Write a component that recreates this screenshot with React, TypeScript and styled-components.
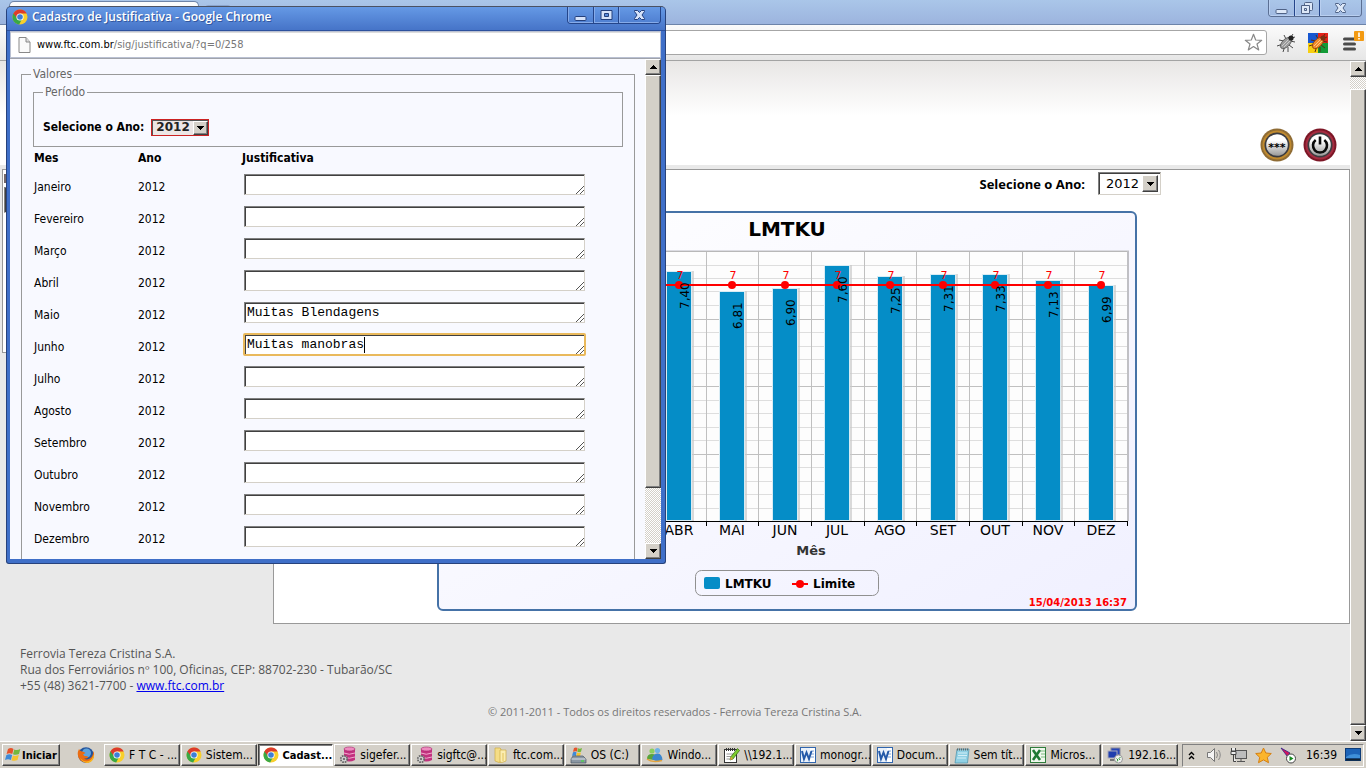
import React from 'react';
import styled, { createGlobalStyle, css } from 'styled-components';

const tahoma = '"DejaVu Sans Condensed", "DejaVu Sans", Tahoma, sans-serif';
const verdana = '"DejaVu Sans", Verdana, sans-serif';
const trebuchet = '"Open Sans", "Trebuchet MS", sans-serif';
const silver = '#d4d0c8';

const GlobalStyle = createGlobalStyle`
  * { box-sizing: border-box; }
  body { margin: 0; overflow: hidden; background: #e9e9e9; font-family: ${tahoma}; font-size: 12px; color: #000; }
  button, select, input, textarea { font: inherit; color: inherit; margin: 0; border-radius: 0; }
  svg { display: block; flex: none; }
`;

const raised = css`
  border: 1px solid;
  border-color: #fff #404040 #404040 #fff;
  box-shadow: inset -1px -1px 0 #808080;
`;
const sunken = css`
  border: 1px solid;
  border-color: #808080 #d4d0c8 #d4d0c8 #808080;
  box-shadow: inset 1px 1px 0 #404040;
`;

/* ---------- desktop and main browser window ---------- */
const Desktop = styled.div`
  position: relative;
  display: flex;
  flex-direction: column;
  height: 100vh;
`;
const TabStrip = styled.div`
  display: flex;
  justify-content: space-between;
  height: 25px;
  padding: 0 4px 0 9px;
  background: linear-gradient(#aac6e9, #9cb4de);
  border-bottom: 1px solid #6d84a9;
`;
const Tab = styled.div`
  width: 190px;
  margin-top: 1px;
  background: #fafbfc;
  border: 1px solid #6d84a9;
  border-bottom: 0;
  border-radius: 5px 5px 0 0;
`;
const NewTab = styled.button`
  width: 26px;
  height: 14px;
  margin: 5px auto 0 6px;
  padding: 0;
  background: #b9cfec;
  border: 1px solid #8aa5cd;
  border-radius: 3px;
`;
const WindowControls = styled.div<{ $bright?: boolean }>`
  display: flex;
  height: 17px;
  border: 1px solid ${p => (p.$bright ? '#24458a' : '#5b6f93')};
  border-top: 0;
  border-radius: 0 0 4px 4px;
  overflow: hidden;
`;
const ControlButton = styled.button<{ $wide?: boolean; $bright?: boolean }>`
  display: flex;
  align-items: center;
  justify-content: center;
  width: ${p => (p.$wide ? 42 : 25)}px;
  padding: 0;
  border: 0;
  background: transparent;
  box-shadow: inset 1px -1px 0 ${p => (p.$bright ? '#86abe9' : '#b9cff0')};
  & + & { border-left: 1px solid ${p => (p.$bright ? '#24458a' : '#5b6f93')}; }
`;
const Toolbar = styled.div`
  display: flex;
  align-items: center;
  height: 36px;
  padding: 0 2px 0 60px;
  background: linear-gradient(#fbfbfb, #e6e6e6);
  border-bottom: 1px solid #a3a3a3;
`;
const AddressBox = styled.div`
  display: flex;
  flex: 1;
  align-items: center;
  height: 25px;
  padding-right: 3px;
  background: #fff;
  border: 1px solid #a6a6a6;
  border-radius: 3px;
`;
const AddressInput = styled.input`
  flex: 1;
  min-width: 0;
  border: 0;
  outline: 0;
  background: transparent;
`;
const IconButton = styled.button<{ $gap?: number }>`
  display: flex;
  margin-left: ${p => p.$gap ?? 0}px;
  padding: 0;
  border: 0;
  background: transparent;
`;
const Viewport = styled.div`
  display: flex;
  flex: 1;
  min-height: 0;
`;
const Page = styled.div`
  flex: 1;
  min-width: 0;
  overflow: hidden;
  background: #e9e9e9;
`;
const SiteHeader = styled.header`
  display: flex;
  align-items: flex-end;
  justify-content: flex-end;
  height: 104px;
  padding: 0 13px 2px 0;
  background: linear-gradient(#e8e6e5, #fff 55px);
`;
const Columns = styled.div`
  display: flex;
  align-items: flex-start;
  padding: 4px 0 0 2px;
`;
const SideMenu = styled.nav`
  width: 264px;
  height: 184px;
  margin-right: 7px;
  background: #fff;
  border: 1px solid #999;
`;
const SideHandle = styled.div`
  width: 16px;
  height: 9px;
  margin: 4px 1px 4px;
  background: #74696a;
`;
const SideBox = styled.div`
  height: 26px;
  margin-left: 1px;
  ${sunken}
`;
const MainPanel = styled.main`
  flex: 1;
  min-width: 0;
  padding: 2px 0 12px 163px;
  background: #fff;
  border: 1px solid #999;
`;
const YearRow = styled.div`
  display: flex;
  align-items: flex-start;
  justify-content: flex-end;
  width: 724px;
  height: 39px;
`;
const YearLabel = styled.label`
  padding-right: 13px;
  font: bold 13px/24px ${trebuchet};
`;
const SelectBox = styled.span<{ $small?: boolean }>`
  position: relative;
  display: block;
  width: ${p => (p.$small ? 58 : 63)}px;
  height: ${p => (p.$small ? 17 : 23)}px;
`;
const YearSelect = styled.select<{ $small?: boolean }>`
  display: block;
  appearance: none;
  width: 100%;
  height: 100%;
  outline: 0;
  ${p => (p.$small ? css`
    padding: 0 0 0 4px;
    font: bold 12px/15px ${verdana};
    color: #222;
    background: #ece7e6;
    border: 1px solid #c22;
    box-shadow: inset 1px 1px 0 #555;
  ` : css`
    padding: 0 0 0 7px;
    font: 13px/21px ${verdana};
    background: #fff;
    ${sunken}
  `)}
`;
const SelectArrow = styled.span<{ $small?: boolean }>`
  position: absolute;
  top: ${p => (p.$small ? 2 : 3)}px;
  right: ${p => (p.$small ? 1 : 3)}px;
  bottom: ${p => (p.$small ? 1 : 3)}px;
  display: flex;
  align-items: center;
  justify-content: center;
  width: ${p => (p.$small ? 15 : 16)}px;
  background: ${silver};
  pointer-events: none;
  ${raised}
`;
const Footer = styled.footer`
  padding: 22px 0 0 20px;
  font: 12px/16px ${trebuchet};
  color: #555;
`;
const Address = styled.address`
  font-style: normal;
  a { color: #00e; }
`;
const Copyright = styled.p`
  margin: 10px 20px 0 0;
  font-size: 11px;
  text-align: center;
  color: #777;
`;

/* ---------- classic scroll bar ---------- */
const ScrollTrack = styled.div`
  display: flex;
  flex-direction: column;
  width: 16px;
  background: repeating-conic-gradient(${silver} 0 25%, #fff 0 50%) 0 0 / 2px 2px;
`;
const ScrollButton = styled.button`
  display: flex;
  align-items: center;
  justify-content: center;
  height: 16px;
  padding: 0;
  background: ${silver};
  ${raised}
`;
const ScrollThumb = styled.div<{ $before: number; $after: number }>`
  flex: 1;
  margin: ${p => p.$before}px 0 ${p => p.$after}px;
  background: ${silver};
  ${raised}
`;

/* ---------- popup window ---------- */
const Popup = styled.section`
  position: absolute;
  top: 6px;
  left: 6px;
  display: flex;
  flex-direction: column;
  width: 660px;
  height: 558px;
  padding: 0 4px 4px 3px;
  background: #3f6fc8;
  border: 1px solid #27427c;
  border-top-color: #4b5263;
  border-radius: 5px 5px 3px 3px;
`;
const PopupTitle = styled.div`
  display: flex;
  align-items: flex-start;
  height: 24px;
  margin: 0 -4px 0 -3px;
  padding: 0 4px 0 5px;
  background: linear-gradient(#6599e5, #4674c8);
  border-bottom: 1px solid #2d519d;
  border-radius: 4px 4px 0 0;
`;
const PopupHeading = styled.h1`
  flex: 1;
  margin: 0;
  padding-left: 4px;
  font: 600 12px/20px ${trebuchet};
  color: #fff;
  text-shadow: 1px 1px 0 #34589f;
`;
const LogoSlot = styled.span`
  padding-top: 2px;
`;
const UrlBar = styled.div`
  display: flex;
  align-items: center;
  height: 27px;
  padding: 0 7px;
  background: #fff;
  border: 1px solid #b9c0d2;
  box-shadow: inset 0 1px 0 #ddd;
`;
const Url = styled.span`
  padding-left: 6px;
  font: 11px/16px ${tahoma};
  color: #777;
  b { font-weight: normal; color: #000; }
`;
const PopupView = styled.div`
  display: flex;
  flex: 1;
  min-height: 0;
  background: #f8f9ff;
  border-top: 1px solid #a0a3ab;
`;
const Form = styled.form`
  flex: 1;
  overflow: hidden;
  padding: 7px 10px 0 11px;
`;
const Group = styled.fieldset<{ $inner?: boolean }>`
  min-width: 0;
  margin: 0;
  padding: ${p => (p.$inner ? '19px 8px 10px 9px' : '2px 11px 20px')};
  border: 1px solid #999;
`;
const Legend = styled.legend<{ $inner?: boolean }>`
  margin-left: ${p => (p.$inner ? 0 : -2)}px;
  padding: 0 2px;
  line-height: 16px;
  color: #666;
`;
const PeriodRow = styled.div`
  display: flex;
  align-items: center;
  gap: 7px;
  font-weight: bold;
  line-height: 17px;
`;
const Months = styled.table`
  width: 100%;
  border-collapse: collapse;
  table-layout: fixed;
  th { height: 21px; padding: 0 0 0 1px; text-align: left; }
  td { height: 32px; padding: 0 0 0 1px; line-height: 16px; }
  th:nth-child(-n + 2) { width: 104px; }
  td:nth-child(-n + 2) { padding-top: 6px; }
  td:last-child { padding: 0 0 0 3px; }
`;
const NoteWrap = styled.div`
  position: relative;
  width: 341px;
  height: 21px;
`;
const Note = styled.textarea<{ $active?: boolean }>`
  display: block;
  width: 100%;
  height: 100%;
  padding: 2px 2px 0;
  resize: none;
  overflow: hidden;
  font: 13px/16px "Liberation Mono", monospace;
  background: #fff;
  ${sunken}
  outline: ${p => (p.$active ? '2px solid #e9b95c' : '0')};
  outline-offset: ${p => (p.$active ? -1 : 0)}px;
  border-radius: ${p => (p.$active ? 1 : 0)}px;
`;
const Grip = styled.span`
  position: absolute;
  right: 1px;
  bottom: 1px;
`;
const Caret = styled.span`
  position: absolute;
  top: 3px;
  left: calc(15ch + 3px);
  width: 1px;
  height: 16px;
  background: #000;
  font: 13px/16px "Liberation Mono", monospace;
`;

/* ---------- taskbar ---------- */
const Taskbar = styled.div`
  display: flex;
  align-items: center;
  height: 27px;
  padding: 1px 2px 0;
  background: ${silver};
  box-shadow: inset 0 1px 0 #fff;
`;
const TaskButton = styled.button<{ $active?: boolean; $start?: boolean }>`
  display: flex;
  align-items: center;
  height: 22px;
  overflow: hidden;
  white-space: nowrap;
  background: ${silver};
  ${raised}
  ${p => (p.$start ? css`
    width: 58px;
    padding: 0 1px;
    gap: 1px;
    font-size: 11px;
    font-weight: bold;
  ` : css`
    flex: 1;
    min-width: 0;
    padding: 0 2px 0 4px;
    gap: 4px;
  `)}
  ${p => p.$active && css`
    font-size: 11px;
    font-weight: bold;
    background: #fff;
    border-color: #404040 #fff #fff #404040;
    box-shadow: inset 1px 1px 0 #808080;
  `}
`;
const QuickLaunch = styled.div`
  padding: 0 9px 0 17px;
`;
const TaskList = styled.div`
  display: flex;
  flex: 1;
  min-width: 0;
  gap: 1px;
`;
const Tray = styled.div`
  display: flex;
  align-items: center;
  gap: 8px;
  height: 23px;
  margin-left: 4px;
  padding: 0 2px 0 4px;
  border: 1px solid;
  border-color: #808080 #fff #fff #808080;
`;
const Clock = styled.time`
  padding-left: 1px;
`;

/* ---------- icons ---------- */
const Triangle = ({ up }: { up?: boolean }) => (
  <svg width="7" height="4" viewBox="0 0 7 4" shapeRendering="crispEdges">
    <path d={up ? 'M3 0h1v1h1v1h1v1h1v1H0V3h1V2h1V1h1z' : 'M0 0h7v1H6v1H5v1H4v1H3V3H2V2H1V1H0z'} />
  </svg>
);

const ChromeLogo = ({ size = 16 }: { size?: number }) => (
  <svg width={size} height={size} viewBox="0 0 16 16">
    <circle cx="8" cy="8" r="7.5" fill="#f8cf2c" />
    <path d="M8 8 1.5 4.3A7.5 7.5 0 0 0 7.2 15.5L10 10z" fill="#39a845" />
    <path d="M1.4 4.4A7.5 7.5 0 0 1 14.7 4.6H8L5 9z" fill="#dc3b2c" />
    <circle cx="8" cy="8" r="3.6" fill="#fff" />
    <circle cx="8" cy="8" r="2.8" fill="#3d7fd6" />
  </svg>
);

const Minimize = ({ c, o }: { c: string; o: string }) => (
  <svg width="13" height="14" viewBox="0 0 13 14"><rect x="1" y="8.5" width="11" height="4" rx="1" fill={c} stroke={o} /></svg>
);
const Maximize = ({ c, o }: { c: string; o: string }) => (
  <svg width="13" height="12" viewBox="0 0 13 12">
    <path d="M1 1.5h11v9H1zM4.500 4.500v3h4v-3z" fill={c} stroke={o} fillRule="evenodd" />
  </svg>
);
const Restore = ({ c, o }: { c: string; o: string }) => (
  <svg width="14" height="14" viewBox="0 0 14 14" fill={c} stroke={o}>
    <rect x="4.500" y="1.500" width="8" height="8" rx="1" />
    <path d="M1.500 4.500h8v8h-8zM4.500 7.500v2h2v-2z" fillRule="evenodd" />
  </svg>
);
const Close = ({ c, o }: { c: string; o: string }) => (
  <svg width="13" height="12" viewBox="0 0 13 12">
    <path d="M1.500 1.500h3l2 2 2-2h3v1L9 6l2.500 3.500v1h-3l-2-2-2 2h-3v-1L4 6 1.500 2.500z" fill={c} stroke={o} />
  </svg>
);
const FavStar = () => (
  <svg width="19" height="19" viewBox="0 0 19 19">
    <path d="M9.500 1.300 11.700 7l6 .3-4.700 3.700 1.700 5.900-5.200-3.400-5.200 3.400L6 11 1.300 7.300l6-.3z" fill="#fff" stroke="#888" strokeWidth="1.200" strokeLinejoin="round" />
  </svg>
);
const Bug = ({ body, back }: { body: string; back?: boolean }) => (
  <svg width="20" height="20" viewBox="0 0 20 20">
    {back && <>
      <path d="M0 0h10v10H0z" fill="#1757d1" /><path d="M10 0h10v10H10z" fill="#e32219" />
      <path d="M0 10h10v10H0z" fill="#f7cf10" /><path d="M10 10h10v10H10z" fill="#129a36" />
    </>}
    <g stroke={back ? '#5a2c10' : '#4a4a4a'} fill="none">
      <path d="M8 8 3 7M7 11l-6 2M9 13l-2 6M13 12l4 3M14 8l5 1M10 6 8 2M12 14v5M15 4l2-3M16 5l3-1" />
    </g>
    <ellipse cx="10" cy="10" rx="7" ry="3.800" transform="rotate(-45 10 10)" fill={body} stroke={back ? '#8a3d0c' : '#555'} strokeWidth=".8" />
    <path d="M6 13 13 6M8 14l6-6" stroke={back ? '#ffc37e' : '#ccc'} />
    <circle cx="15" cy="5" r="2.600" fill={back ? '#7c2f12' : '#222'} />
  </svg>
);
const MenuIcon = () => (
  <svg width="22" height="26" viewBox="0 0 22 26">
    <path d="M2.500 9h10M2.500 14h10M2.500 19h10" stroke="#4b4b4b" strokeWidth="3" strokeLinecap="round" />
    <rect x="12" y="1" width="10" height="10" rx="1" fill="#f39a12" />
    <path d="M17 2.500v4.500M17 8v1.500" stroke="#fff" strokeWidth="1.600" />
  </svg>
);
const RoundBadge = ({ kind }: { kind: 'password' | 'power' }) => {
  const pw = kind === 'password';
  return (
    <svg width="34" height="36" viewBox="0 0 34 36">
      <defs>
        <linearGradient id={`face-${kind}`} x1="0" y1="0" x2="0" y2="1">
          <stop offset="0.3" stopColor="#fff" /><stop offset="1" stopColor="#999" />
        </linearGradient>
      </defs>
      <circle cx="17" cy="18" r="16.500" fill={pw ? '#8f6c35' : '#7c1626'} />
      <circle cx="17" cy="18" r="14.500" fill={pw ? '#c08a2f' : '#a52c40'} />
      <circle cx="17" cy="18" r="12.500" fill="#3c3c40" />
      <circle cx="17" cy="18" r="10.800" fill={`url(#face-${kind})`} />
      {pw
        ? <text x="17" y="24" fontFamily={verdana} fontSize="11" fontWeight="bold" textAnchor="middle">***</text>
        : <><path d="M12.700 13a7 7 0 1 0 8.600 0" fill="none" stroke="#0c0c0c" strokeWidth="2.600" /><path d="M17 9.500v8" stroke="#0c0c0c" strokeWidth="2.600" /></>}
    </svg>
  );
};
const PageIcon = () => (
  <svg width="13" height="16" viewBox="0 0 13 16">
    <path d="M1 .5h7L12 5v10.500H1z" fill="#fafafa" stroke="#888" /><path d="M8 .5V5h4" fill="#ddd" stroke="#888" />
  </svg>
);
const GripIcon = () => (
  <svg width="8" height="8" viewBox="0 0 8 8" stroke="#555">
    <path d="M0 8 8 0M4 8l4-4" />
  </svg>
);
const WindowsFlag = () => (
  <svg width="17" height="16" viewBox="0 0 17 16">
    <path d="M4 2q3-2 5.500 0L8.300 7Q5.500 5.500 2.600 7z" fill="#e6532a" />
    <path d="M10.300 2.500q3 1.300 6-.5L15 7q-3 1.500-6 .3z" fill="#74b83c" />
    <path d="M2.400 7.900q3-1.500 5.700 0L7 13q-3-1.600-6 0z" fill="#3d8ad8" />
    <path d="M8.900 8.400q3 1.200 5.900-.3l-1.300 5q-3 1.400-6 .2z" fill="#f6c32c" />
  </svg>
);
const Firefox = () => (
  <svg width="18" height="18" viewBox="0 0 18 18">
    <circle cx="9" cy="9" r="7.800" fill="#24539b" /><circle cx="9.500" cy="7" r="4.500" fill="#5fa3dc" />
    <path d="M2 3q-3 6 1 11 5 4.500 10.500 1.500Q18.500 11.500 16.500 5q-.5 4-2 6Q11 15 7 12.500q3 .5 4.500-1.500-2-1.500-4-1L6 8.500 8.500 7Q7 5.500 5 5.500 3 5 2 3z" fill="#ea6c12" />
    <path d="M3 12q4 4.500 9 3 4-2 4.500-7 1.500 5-3 8-6 3-10.500-4z" fill="#f9b51e" />
  </svg>
);
const Database = () => (
  <svg width="17" height="18" viewBox="0 0 17 18">
    <path d="M5 3v11q5 3 11 0V3z" fill="#c2327e" /><path d="M5 7q5 2.500 11 0M5 11q5 2.500 11 0" stroke="#f3a9d0" fill="none" />
    <ellipse cx="10.500" cy="3" rx="5.500" ry="2" fill="#ee8cc0" stroke="#a32468" strokeWidth=".6" />
    <circle cx="5" cy="13" r="3.200" fill="#ddd" stroke="#666" strokeWidth="1.800" strokeDasharray="1.700 .8" /><circle cx="5" cy="13" r="1.300" fill="#777" />
  </svg>
);
const Folder = () => (
  <svg width="16" height="16" viewBox="0 0 16 16">
    <path d="M2 1h5l1 1v13l-2 .5L2 14z" fill="#f5dd86" stroke="#cfae46" strokeWidth=".7" /><path d="M7 3h6v11l-4 1.500L7 15z" fill="#fbedb0" stroke="#cfae46" strokeWidth=".7" /><path d="M10 6v8" stroke="#e2c25b" />
  </svg>
);
const Drive = () => (
  <svg width="17" height="17" viewBox="0 0 17 17">
    <path d="M4 1q2-1 3.500 0L7 4.500Q5 4 3 4.800z" fill="#e6532a" /><path d="M8 1.300q2 .8 4-.3l-1 3.800q-2 .8-3.700 0z" fill="#74b83c" />
    <path d="M3 5.300q2-1 3.500 0L6 9Q4 8 2 9z" fill="#3d8ad8" /><path d="M7 5.500q2 .8 4 0l-1 3.500H6.300z" fill="#f6c32c" />
    <path d="M3 9h10l3 3v4H1v-4z" fill="#8b97a3" stroke="#4b5661" strokeWidth=".7" /><path d="M1.500 12h14" stroke="#dbe2e8" /><path d="M11 14h3" stroke="#4fd04f" strokeWidth="1.500" />
  </svg>
);
const People = () => (
  <svg width="17" height="16" viewBox="0 0 17 16">
    <circle cx="6" cy="4" r="2.600" fill="#8ccf5d" /><circle cx="11.500" cy="3.600" r="2.600" fill="#6fb3e6" />
    <path d="M1 12q0-5 5-5t5 4l-3 2z" fill="#58a43a" /><path d="M6 12q1-5.500 6-5.500 4 .5 4.500 6.500-5 3-10.500-1z" fill="#3a86cf" />
    <path d="M1 12q5 4 15 1.500" stroke="#e3a33c" strokeWidth="1.600" fill="none" />
  </svg>
);
const NotepadPlus = () => (
  <svg width="17" height="17" viewBox="0 0 17 17">
    <rect x="1.500" y="2.500" width="12" height="13" fill="#fff" stroke="#333" /><path d="M3 2.500h10" stroke="#333" strokeWidth="3" strokeDasharray="1 1" />
    <path d="M3.500 7h7M3.500 9.500h5M3.500 12h4" stroke="#999" /><path d="m7 13 1-3.500 6.500-8 2 2L10 12z" fill="#7ccb2c" stroke="#30610d" strokeWidth=".7" />
    <path d="m7 13 1-3.500L10 12z" fill="#e8a33c" />
  </svg>
);
const Word = () => (
  <svg width="16" height="16" viewBox="0 0 16 16">
    <rect x=".5" y=".5" width="15" height="15" fill="#e9f1fb" stroke="#3266ad" /><rect x="10" y="1" width="5" height="14" fill="#fff" />
    <path d="M11 4h3M11 7h3M11 10h3" stroke="#7aa0d6" /><path d="m2 4 2 8 2.500-6.500L9 12l2.500-8" fill="none" stroke="#2459a8" strokeWidth="2" />
  </svg>
);
const Notepad = () => (
  <svg width="16" height="17" viewBox="0 0 16 17">
    <path d="M3 2h12l-1.500 14H1z" fill="#8fd0e4" stroke="#4a8fa8" strokeWidth=".7" /><path d="M3 2.500h12" stroke="#666" strokeWidth="2" strokeDasharray="1 1" />
    <path d="M4 6h9M4 8.500h9M3 11h9" stroke="#d5eff7" />
  </svg>
);
const Excel = () => (
  <svg width="16" height="16" viewBox="0 0 16 16">
    <rect x=".5" y=".5" width="15" height="15" fill="#f0f8ee" stroke="#2f7d3c" /><path d="M11 4h4M11 7h4M11 10h4" stroke="#7dba7f" />
    <path d="m3 3 7 10M10 3 3 13" stroke="#1f7a34" strokeWidth="2.600" />
  </svg>
);
const RemoteDesktop = () => (
  <svg width="17" height="17" viewBox="0 0 17 17">
    <rect x="4" y="1" width="9" height="7" fill="#2746b8" stroke="#889" /><rect x="1" y="4" width="9" height="7" fill="#1f3fae" stroke="#aab" />
    <path d="M3 13h5" stroke="#777" strokeWidth="2" /><circle cx="11.500" cy="12" r="4" fill="#f2f2f2" stroke="#999" /><path d="m9.500 11.500 1.500 1.500-1 1.500M13.500 10 12 11.500l1 1.500" stroke="#2f9b36" fill="none" />
  </svg>
);
const Chevrons = () => (
  <svg width="11" height="9" viewBox="0 0 11 9" fill="none" stroke="#000" strokeWidth="1.400"><path d="M2 4l2.500-2.500L7 4M2 8l2.500-2.500L7 8" /></svg>
);
const Speaker = () => (
  <svg width="16" height="16" viewBox="0 0 16 16">
    <path d="M1.500 5.500h3l4-4v13l-4-4h-3z" fill="#f4f4f4" stroke="#777" /><path d="M10.500 5q2 3 0 6M12.500 3q3.500 5 0 10" fill="none" stroke="#888" />
  </svg>
);
const Network = () => (
  <svg width="17" height="16" viewBox="0 0 17 16">
    <rect x="5.500" y="3.500" width="11" height="8" fill="#bdbdbd" stroke="#555" /><path d="M7 14.500h8M11 12v2" stroke="#555" />
    <path d="M1.500 1v3h4V1M1 4.500h5v3H1zM3.500 8v6.500H6" fill="#eee" stroke="#444" />
  </svg>
);
const GoldStar = () => (
  <svg width="17" height="17" viewBox="0 0 17 17">
    <path d="m8.500 1 2.300 5 5.500.5-4 3.800 1.200 5.400-5-2.800-5 2.800 1.200-5.400-4-3.800 5.500-.5z" fill="#fbb52d" stroke="#d57f12" strokeLinejoin="round" />
  </svg>
);
const PlayArrow = () => (
  <svg width="17" height="17" viewBox="0 0 17 17">
    <path d="m1 1 9 5-3 3z" fill="#d3145c" stroke="#30208a" strokeWidth=".8" /><circle cx="11" cy="11.500" r="4.500" fill="#fff" stroke="#444" /><path d="m9.500 9 4 2.500-4 2.500z" fill="#158a1e" />
  </svg>
);
const ShowDesktop = () => (
  <svg width="16" height="14" viewBox="0 0 16 14">
    <rect x=".5" y=".5" width="15" height="12" fill="#1d63b7" stroke="#0d3c78" /><path d="M1 9q6-5 14-2v3H1z" fill="#3f8fd9" /><path d="M1 11.500h14" stroke="#123" strokeWidth="2" />
  </svg>
);

/* ---------- chart ---------- */
const bars = [
  { month: 'ABR', slot: 3, value: 7.4 },
  { month: 'MAI', slot: 4, value: 6.81 },
  { month: 'JUN', slot: 5, value: 6.9 },
  { month: 'JUL', slot: 6, value: 7.6 },
  { month: 'AGO', slot: 7, value: 7.25 },
  { month: 'SET', slot: 8, value: 7.31 },
  { month: 'OUT', slot: 9, value: 7.33 },
  { month: 'NOV', slot: 10, value: 7.13 },
  { month: 'DEZ', slot: 11, value: 6.99 },
];
const plot = { left: 58, right: 690, top: 40, bottom: 310 };
const slotX = (n: number) => Math.round(plot.left + ((plot.right - plot.left) / 12) * n);
const valueY = (v: number) => Math.round(plot.bottom - (v * (plot.bottom - plot.top)) / 8);
const LIMIT = 7;

const ChartSvg = styled.svg`
  font-family: ${verdana};
  text-anchor: middle;
`;

const Chart = () => (
  <ChartSvg width="700" height="400" viewBox="0 0 700 400" role="img" aria-label="LMTKU">
    <defs>
      <linearGradient id="chart-back" x1="0" y1="0" x2="1" y2="1">
        <stop offset="0" stopColor="#fff" /><stop offset="1" stopColor="#f0f0ff" />
      </linearGradient>
    </defs>
    <rect x="1" y="1" width="698" height="398" rx="5" fill="url(#chart-back)" stroke="#4572a7" strokeWidth="2" />
    <text x="350" y="25" fontSize="20" fontWeight="bold">LMTKU</text>
    <g shapeRendering="crispEdges">
      <rect x={plot.left} y={plot.top} width={632} height={270} fill="#fdfdfd" />
      {Array.from({ length: 20 }, (_, i) => (
        <path key={i} d={`M${plot.left} ${valueY(i * 0.4) + 0.5}H${plot.right}`} stroke={i % 5 ? '#dedede' : '#c0c0c0'} />
      ))}
      {Array.from({ length: 13 }, (_, i) => (
        <path key={i} d={`M${slotX(i) + 0.5} ${plot.top}V${plot.bottom}`} stroke="#c0c0c0" />
      ))}
      <path d={`M${plot.left} ${plot.top - 0.5}H692`} stroke="#dcdce2" />
      <path d={`M${plot.left} ${plot.top + 0.5}H691`} stroke="#b8b8b8" />
      <path d={`M691 ${plot.top}V${plot.bottom}`} stroke="#c0c0c4" strokeWidth="2" />
      {bars.map(b => {
        const x = slotX(b.slot + 0.5) - 13;
        const y = valueY(b.value);
        return (
          <g key={b.month}>
            <rect x={x + 2} y={y} width="26" height={plot.bottom - y} fill="#c9c9c9" opacity=".7" />
            <rect x={x} y={y} width="26" height={plot.bottom - y} fill="#d8ecf4" />
            <rect x={x + 1} y={y + 1} width="24" height={plot.bottom - y - 2} fill="#058dc7" />
          </g>
        );
      })}
      <path d={`M${plot.left} ${plot.bottom + 0.5}H691`} stroke="#000" />
      {Array.from({ length: 13 }, (_, i) => (
        <path key={i} d={`M${slotX(i) + 0.5} ${plot.bottom}v5`} stroke="#000" />
      ))}
    </g>
    {bars.map(b => {
      const c = slotX(b.slot + 0.5);
      return (
        <g key={b.month}>
          <text x={c} y="324" fontSize="14">{b.month}</text>
          <text x={c + 1} y="68" fontSize="11" fill="#f00">{LIMIT}</text>
        </g>
      );
    })}
    <path d={`M200 74H${slotX(11.5)}`} stroke="#f00" strokeWidth="2" />
    {bars.map(b => {
      const c = slotX(b.slot + 0.5);
      return (
        <g key={b.month}>
          <circle cx={c} cy="74" r="4" fill="#f00" />
          <text transform={`translate(${c + 10} ${valueY(b.value) + 38}) rotate(-90)`} fontSize="12" textAnchor="start">
            {b.value.toFixed(2).replace('.', ',')}
          </text>
        </g>
      );
    })}
    <text x="374" y="344" fontSize="13" fontWeight="bold" fill="#333">Mês</text>
    <rect x="258.500" y="359.500" width="183" height="25" rx="6" fill="none" stroke="#909090" />
    <rect x="267" y="366" width="16" height="12" rx="2" fill="#058dc7" />
    <g fontSize="12" fontWeight="bold" textAnchor="start">
      <text x="288" y="377">LMTKU</text>
      <text x="376" y="377">Limite</text>
    </g>
    <path d="M355 373h16" stroke="#f00" strokeWidth="2" />
    <circle cx="363" cy="373" r="4" fill="#f00" />
    <text x="690" y="395" fontSize="10" fontWeight="bold" fill="#f00" textAnchor="end">15/04/2013 16:37</text>
  </ChartSvg>
);

/* ---------- data ---------- */
const months: { name: string; note?: string; active?: boolean }[] = [
  { name: 'Janeiro' }, { name: 'Fevereiro' }, { name: 'Março' }, { name: 'Abril' },
  { name: 'Maio', note: 'Muitas Blendagens' },
  { name: 'Junho', note: 'Muitas manobras', active: true },
  { name: 'Julho' }, { name: 'Agosto' }, { name: 'Setembro' }, { name: 'Outubro' },
  { name: 'Novembro' }, { name: 'Dezembro' },
];

const tasks: { label: string; icon: React.ReactNode; active?: boolean }[] = [
  { label: 'F T C - ...', icon: <ChromeLogo /> },
  { label: 'Sistem...', icon: <ChromeLogo /> },
  { label: 'Cadast...', icon: <ChromeLogo />, active: true },
  { label: 'sigefer...', icon: <Database /> },
  { label: 'sigftc@...', icon: <Database /> },
  { label: 'ftc.com...', icon: <Folder /> },
  { label: 'OS (C:)', icon: <Drive /> },
  { label: 'Windo...', icon: <People /> },
  { label: '\\\\192.1...', icon: <NotepadPlus /> },
  { label: 'monogr...', icon: <Word /> },
  { label: 'Docum...', icon: <Word /> },
  { label: 'Sem tít...', icon: <Notepad /> },
  { label: 'Micros...', icon: <Excel /> },
  { label: '192.16...', icon: <RemoteDesktop /> },
];

const Scrollbar = ({ before, after }: { before: number; after: number }) => (
  <ScrollTrack>
    <ScrollButton type="button" aria-label="Rolar para cima"><Triangle up /></ScrollButton>
    <ScrollThumb $before={before} $after={after} />
    <ScrollButton type="button" aria-label="Rolar para baixo"><Triangle /></ScrollButton>
  </ScrollTrack>
);

const YearPicker = ({ id, small }: { id: string; small?: boolean }) => (
  <SelectBox $small={small}>
    <YearSelect id={id} $small={small} defaultValue="2012"><option>2012</option></YearSelect>
    <SelectArrow $small={small}><Triangle /></SelectArrow>
  </SelectBox>
);

const JustificationPopup = () => (
  <Popup>
    <PopupTitle>
      <LogoSlot><ChromeLogo /></LogoSlot>
      <PopupHeading>Cadastro de Justificativa - Google Chrome</PopupHeading>
      <WindowControls $bright>
        <ControlButton $bright aria-label="Minimizar"><Minimize c="#d6e3fa" o="#24407c" /></ControlButton>
        <ControlButton $bright aria-label="Maximizar"><Maximize c="#d6e3fa" o="#24407c" /></ControlButton>
        <ControlButton $bright $wide aria-label="Fechar"><Close c="#d6e3fa" o="#24407c" /></ControlButton>
      </WindowControls>
    </PopupTitle>
    <UrlBar><PageIcon /><Url><b>www.ftc.com.br</b>/sig/justificativa/?q=0/258</Url></UrlBar>
    <PopupView>
      <Form>
        <Group>
          <Legend>Valores</Legend>
          <Group $inner>
            <Legend $inner>Período</Legend>
            <PeriodRow>
              <label htmlFor="popup-year">Selecione o Ano:</label>
              <YearPicker id="popup-year" small />
            </PeriodRow>
          </Group>
          <Months>
            <thead><tr><th>Mes</th><th>Ano</th><th>Justificativa</th></tr></thead>
            <tbody>
              {months.map(m => (
                <tr key={m.name}>
                  <td>{m.name}</td>
                  <td>2012</td>
                  <td>
                    <NoteWrap>
                      <Note rows={1} $active={m.active} aria-label={`Justificativa de ${m.name}`} defaultValue={m.note} spellCheck={false} />
                      {m.active && <Caret />}
                      <Grip><GripIcon /></Grip>
                    </NoteWrap>
                  </td>
                </tr>
              ))}
            </tbody>
          </Months>
        </Group>
      </Form>
      <Scrollbar before={0} after={55} />
    </PopupView>
  </Popup>
);

export default function App() {
  return (
    <Desktop>
      <GlobalStyle />
      <TabStrip>
        <Tab />
        <NewTab aria-label="Nova guia" />
        <WindowControls>
          <ControlButton aria-label="Minimizar"><Minimize c="#dde8f8" o="#4f6286" /></ControlButton>
          <ControlButton aria-label="Restaurar"><Restore c="#dde8f8" o="#4f6286" /></ControlButton>
          <ControlButton $wide aria-label="Fechar"><Close c="#dde8f8" o="#4f6286" /></ControlButton>
        </WindowControls>
      </TabStrip>
      <Toolbar>
        <AddressBox>
          <AddressInput aria-label="Endereço" />
          <IconButton aria-label="Favorito"><FavStar /></IconButton>
        </AddressBox>
        <IconButton $gap={9} aria-label="Depurar"><Bug body="#9b9b9b" /></IconButton>
        <IconButton $gap={12} aria-label="Extensão"><Bug body="#f08a2c" back /></IconButton>
        <IconButton $gap={14} aria-label="Menu"><MenuIcon /></IconButton>
      </Toolbar>
      <Viewport>
        <Page>
          <SiteHeader>
            <IconButton aria-label="Senha"><RoundBadge kind="password" /></IconButton>
            <IconButton $gap={9} aria-label="Sair"><RoundBadge kind="power" /></IconButton>
          </SiteHeader>
          <Columns>
            <SideMenu><SideHandle /><SideBox /></SideMenu>
            <MainPanel>
              <YearRow>
                <YearLabel htmlFor="page-year">Selecione o Ano:</YearLabel>
                <YearPicker id="page-year" />
              </YearRow>
              <Chart />
            </MainPanel>
          </Columns>
          <Footer>
            <Address>
              Ferrovia Tereza Cristina S.A.<br />
              Rua dos Ferroviários nº 100, Oficinas, CEP: 88702-230 - Tubarão/SC<br />
              +55 (48) 3621-7700 - <a href="http://www.ftc.com.br">www.ftc.com.br</a>
            </Address>
            <Copyright>© 2011-2011 - Todos os direitos reservados - Ferrovia Tereza Cristina S.A.</Copyright>
          </Footer>
        </Page>
        <Scrollbar before={12} after={0} />
      </Viewport>
      <Taskbar>
        <TaskButton $start><WindowsFlag />Iniciar</TaskButton>
        <QuickLaunch><IconButton aria-label="Firefox"><Firefox /></IconButton></QuickLaunch>
        <TaskList>
          {tasks.map(t => <TaskButton key={t.label} $active={t.active}>{t.icon}{t.label}</TaskButton>)}
        </TaskList>
        <Tray>
          <Chevrons /><Speaker /><Network /><GoldStar /><PlayArrow />
          <Clock>16:39</Clock>
          <ShowDesktop />
        </Tray>
      </Taskbar>
      <JustificationPopup />
    </Desktop>
  );
}
